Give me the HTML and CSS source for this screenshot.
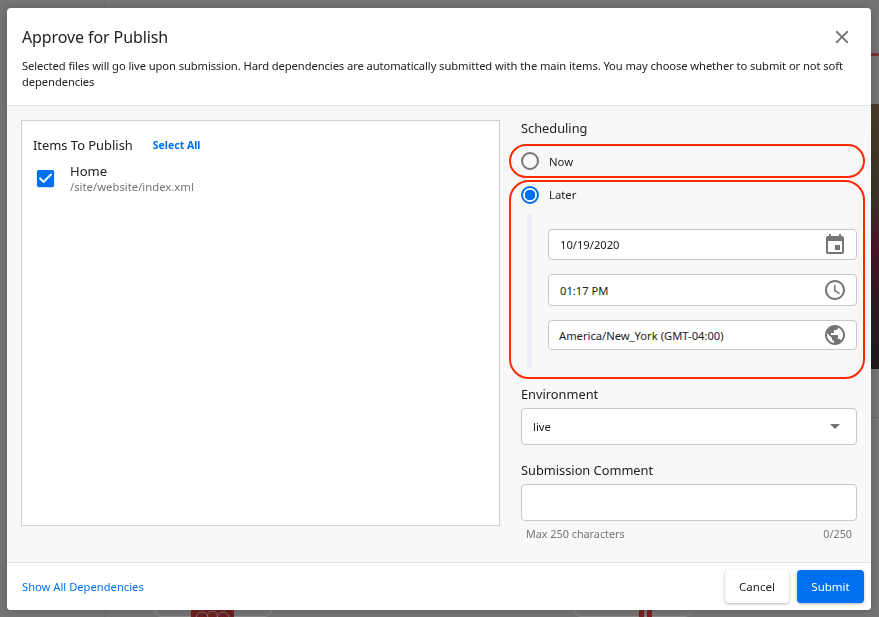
FILE: index.html
```html
<!DOCTYPE html>
<html lang="en">
<head>
  <meta charset="UTF-8">
  <meta name="viewport" content="width=device-width, initial-scale=1.0">
  <title>Approve for Publish</title>
  <link rel="stylesheet" href="styles.css">
</head>
<body>
  <div class="backdrop">
    <div class="bg-line"></div>
    <div class="bg-rule"></div>
    <div class="bg-side bg-side-a"></div>
    <div class="bg-side bg-side-b"></div>
    <div class="bg-pill bg-pill-a"></div>
    <div class="bg-pill bg-pill-b"></div>
    <svg class="bg-logo" width="43" height="7" viewBox="0 0 43 7"><rect width="43" height="7" fill="#6f2020"/><circle cx="11" cy="8" r="6" fill="none" stroke="#757575"/><circle cx="32" cy="8" r="6" fill="none" stroke="#757575"/><circle cx="21.5" cy="6" r="5" fill="none" stroke="#757575"/></svg>
    <div class="bg-bars"><i></i><i></i></div>
  </div>

  <div class="dialog">
    <header class="dialog-head">
      <div class="title-row">
        <h2>Approve for Publish</h2>
        <svg class="close" width="22" height="22" viewBox="0 0 24 24"><path fill="#757575" d="M19 6.41 17.59 5 12 10.59 6.41 5 5 6.41 10.59 12 5 17.59 6.41 19 12 13.41 17.59 19 19 17.59 13.41 12z"/></svg>
      </div>
      <p>Selected files will go live upon submission. Hard dependencies are automatically submitted with the main items. You may choose whether to submit or not soft dependencies</p>
    </header>

    <div class="dialog-body">
      <section class="items">
        <div class="items-head">
          <span class="items-title">Items To Publish</span>
          <a class="select-all">Select All</a>
        </div>
        <div class="item">
          <svg class="check" width="23" height="23" viewBox="0 0 24 24"><path fill="#0070f3" d="M19 3H5c-1.11 0-2 .9-2 2v14c0 1.1.89 2 2 2h14c1.11 0 2-.9 2-2V5c0-1.1-.89-2-2-2z"/><path fill="#fff" d="m10 17-5-5 1.41-1.41L10 14.17l7.59-7.59L19 8z"/></svg>
          <div>
            <div class="item-name">Home</div>
            <div class="item-path">/site/website/index.xml</div>
          </div>
        </div>
      </section>

      <section class="side">
        <h3 class="label">Scheduling</h3>
        <div class="ring ring-now">
          <label class="radio"><span class="dot"></span>Now</label>
        </div>
        <div class="ring ring-later">
          <label class="radio"><span class="dot dot-on"></span>Later</label>
          <div class="later-fields">
            <div class="rail"></div>
            <div class="fields">
              <div class="field">
                <span>10/19/2020</span>
                <svg width="24" height="24" viewBox="0 0 24 24"><path fill="#757575" d="M17 12h-5v5h5v-5zM16 1v2H8V1H6v2H5c-1.11 0-1.99.9-1.99 2L3 19c0 1.1.89 2 2 2h14c1.1 0 2-.9 2-2V5c0-1.1-.9-2-2-2h-1V1h-2zm3 18H5V8h14v11z"/></svg>
              </div>
              <div class="field field-time">
                <span>01:17 PM</span>
                <svg width="24" height="24" viewBox="0 0 24 24"><path fill="#757575" d="M11.99 2C6.47 2 2 6.48 2 12s4.47 10 9.99 10C17.52 22 22 17.52 22 12S17.52 2 11.99 2zM12 20c-4.42 0-8-3.58-8-8s3.58-8 8-8 8 3.58 8 8-3.58 8-8 8z"/><path fill="#757575" d="M12.5 7H11v6l5.25 3.15.75-1.23-4.5-2.67z"/></svg>
              </div>
              <div class="field field-zone">
                <span>America/New_York (GMT-04:00)</span>
                <svg width="24" height="24" viewBox="0 0 24 24"><path fill="#757575" d="M12 2C6.48 2 2 6.48 2 12s4.48 10 10 10 10-4.48 10-10S17.52 2 12 2zm-1 17.93c-3.95-.49-7-3.85-7-7.93 0-.62.08-1.21.21-1.79L9 15v1c0 1.1.9 2 2 2v1.93zm6.9-2.54c-.26-.81-1-1.39-1.9-1.39h-1v-3c0-.55-.45-1-1-1H8v-2h2c.55 0 1-.45 1-1V7h2c1.1 0 2-.9 2-2v-.41c2.93 1.19 5 4.06 5 7.41 0 2.08-.8 3.97-2.1 5.39z"/></svg>
              </div>
            </div>
          </div>
        </div>

        <h3 class="label label-env">Environment</h3>
        <div class="box box-select">
          <span>live</span>
          <i class="caret"></i>
        </div>

        <h3 class="label label-comment">Submission Comment</h3>
        <div class="box box-comment"></div>
        <div class="hint">
          <span>Max 250 characters</span>
          <span>0/250</span>
        </div>
      </section>
    </div>

    <footer class="dialog-foot">
      <a class="deps">Show All Dependencies</a>
      <div class="actions">
        <button class="btn">Cancel</button>
        <button class="btn btn-primary">Submit</button>
      </div>
    </footer>
  </div>
</body>
</html>
```

FILE: styles.css
```css
* { box-sizing: border-box; }
html, body { height: 100%; }
body { margin: 0; padding: 8px 8px 7px 7px; background: #757575; font-family: "Noto Sans", "Liberation Sans", sans-serif; color: #212121; overflow: hidden; }

/* page behind the modal */
.backdrop { position: fixed; inset: 0; overflow: hidden; }
.bg-line { position: absolute; left: 105px; top: 0; width: 1px; height: 100%; background: #6a6a6a; }
.bg-rule { position: absolute; left: 871px; top: 417px; width: 8px; height: 1px; background: #666; }
.bg-side { position: absolute; left: 871px; width: 8px; }
.bg-side-a { top: 53px; height: 3px; background: #7c3232; }
.bg-side-b { top: 104px; height: 265px; background: linear-gradient(#4a3b2c, #3a3528 35%, #4a1426 55%, #2c1c22 75%, #1e1c1e); }
.bg-pill { position: absolute; top: 605px; width: 116px; height: 12px; border: 1px solid #8a8a8a; border-radius: 6px; }
.bg-pill-a { left: 155px; }
.bg-pill-b { left: 575px; }
.bg-logo { position: absolute; left: 191px; top: 610px; }
.bg-bars { position: absolute; left: 639px; top: 610px; display: flex; gap: 3px; }
.bg-bars i { width: 5px; height: 7px; background: #7a2020; }

.dialog { position: relative; height: 602px; width: 864px; background: #fff; border-radius: 4px; display: flex; flex-direction: column; box-shadow: 0 0 10px rgba(0,0,0,0.2); }

.dialog-head { height: 98px; padding: 14px 17px 0 15px; border-bottom: 1px solid #e0e0e0; flex: none; }
.title-row { display: flex; justify-content: space-between; align-items: center; height: 30px; }
h2 { margin: 0; font-size: 16px; letter-spacing: -0.1px; font-weight: 400; line-height: 30px; }
.dialog-head p { margin: 6px 0 0; font-size: 11.2px; letter-spacing: -0.08px; line-height: 16px; width: 840px; }
.close { flex: none; margin-right: 1px; }

.dialog-body { flex: 1; min-height: 0; background: #f8f8f8; display: flex; padding: 14px 14px 0 14px; gap: 21px; }

.items { width: 479px; height: 406px; background: #fff; border: 1px solid #d0d0d0; padding: 14px 11px; flex: none; }
.items-head { display: flex; align-items: center; gap: 20px; height: 20px; }
.items-title { font-size: 12.9px; }
.select-all { font-size: 10.5px; font-weight: 700; color: #0070f3; }
.item { display: flex; gap: 13px; margin-top: 7px; padding-left: 1px; align-items: center; }
.item-name { font-size: 13px; line-height: 18px; }
.item-path { font-size: 11.3px; line-height: 14px; color: #757575; }

.side { width: 336px; flex: none; }
.label { margin: 0; font-size: 12.8px; font-weight: 400; line-height: 16px; }
.ring { border: 2px solid #ff2a00; margin-left: -12px; margin-right: -8px; }
.ring-now { height: 34px; border-radius: 17px; margin-top: 8px; display: flex; align-items: center; }
.ring-later { height: 199px; border-radius: 20px; margin-top: 2px; padding-top: 1px; }
.radio { display: flex; align-items: center; gap: 10px; font-size: 11.3px; padding-left: 10px; height: 23px; }
.ring-now .radio { height: auto; }
.dot { width: 18px; height: 18px; border-radius: 50%; border: 2px solid #757575; flex: none; }
.dot-on { border-color: #0070f3; background: radial-gradient(circle, #0070f3 0 5px, transparent 5.5px); }

.later-fields { display: flex; padding: 8px 6px 0 16px; }
.rail { width: 5px; height: 154px; background: #eeeef4; border-radius: 2px; flex: none; }
.fields { flex: 1; padding: 15px 0 0 16px; display: flex; flex-direction: column; gap: 14px; }
.field { height: 31px; background: #fff; border: 1px solid #c4c8d0; border-radius: 4px; display: flex; justify-content: space-between; align-items: center; font-size: 11.2px; padding: 0 9px 0 11px; }
.field-time { height: 32px; }
.field-zone { height: 30px; padding-left: 10px; }

.label-env { margin-top: 7px; }
.label-comment { margin-top: 17px; }
.box { height: 37px; margin-top: 6px; background: #fff; border: 1px solid #c4c8d0; border-radius: 4px; }
.box-select { display: flex; justify-content: space-between; align-items: center; font-size: 11.3px; padding: 0 16px 0 11px; }
.box-comment { margin-top: 6px; }
.label-comment { padding-top: 1px; line-height: 15px; }
.caret { width: 0; height: 0; border-left: 5px solid transparent; border-right: 5px solid transparent; border-top: 5px solid #757575; }
.hint { display: flex; justify-content: space-between; font-size: 10.8px; line-height: 14px; color: #757575; padding: 6px 5px 0; }

.dialog-foot { height: 48px; flex: none; background: #fff; border-top: 1px solid #e0e0e0; border-radius: 0 0 4px 4px; display: flex; justify-content: space-between; align-items: center; padding: 0 7px 0 15px; }
.deps { font-size: 11.2px; color: #0070f3; }
.actions { display: flex; gap: 8px; }
.btn { height: 33px; border: none; border-radius: 4px; background: #fff; font-family: inherit; font-size: 11.5px; color: #212121; width: 64px; padding: 0; box-shadow: 0 1px 3px rgba(0,0,0,0.3); }
.btn-primary { background: #0070f3; color: #fff; width: 67px; }
```
